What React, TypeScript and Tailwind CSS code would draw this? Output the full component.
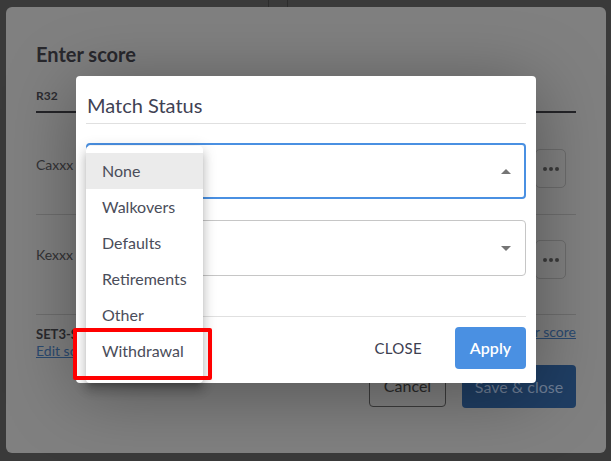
import React from "react";

const statuses = ["None", "Walkovers", "Defaults", "Retirements", "Other", "Withdrawal"];

const MoreButton: React.FC = () => (
  <button className="mr-[10px] w-[31px] h-[39px] rounded-[5px] border border-[#6c6c6c] flex items-center justify-center gap-[2px]">
    <span className="w-[4px] h-[4px] rounded-full bg-[#3a3a3a]" />
    <span className="w-[4px] h-[4px] rounded-full bg-[#3a3a3a]" />
    <span className="w-[4px] h-[4px] rounded-full bg-[#3a3a3a]" />
  </button>
);

const Caret: React.FC<{ up?: boolean }> = ({ up }) => (
  <svg width="10" height="5" viewBox="0 0 10 5" className="text-[#757575]">
    {up ? <path d="M0 5 L5 0 L10 5 Z" fill="currentColor" /> : <path d="M0 0 L5 5 L10 0 Z" fill="currentColor" />}
  </svg>
);

const App: React.FC = () => {
  return (
    <div className="relative w-[611px] h-[461px] overflow-hidden bg-[#3a3a3a] font-['Lato','Noto_Sans',sans-serif] flex flex-col">
      {/* page behind, dimmed */}
      <div className="h-[7px] flex shrink-0">
        <div className="w-[268px]" />
        <div className="w-[20px] border-x border-[#2c2c2c]" />
      </div>

      <div className="relative mx-[6px] w-[600px] h-[446px] rounded-[6px] bg-[#808080] px-[30px] pt-[33px]">
        <h2 className="text-[20px] leading-[28px] font-bold text-[#28282d]">Enter score</h2>

        <div className="mt-[21px] border-b-2 border-[#242428] pb-[8px]">
          <span className="block text-[12px] leading-[14px] font-bold text-[#2c2c30]">R32</span>
        </div>

        <div className="flex items-start justify-between pt-[36px] pb-[26px] border-b border-[#6e6e6e]">
          <span className="pt-[6px] text-[14px] leading-[20px] text-[#333336]">Caxxx</span>
          <MoreButton />
        </div>

        <div className="flex items-start justify-between pt-[25px] pb-[35px] border-b border-[#6e6e6e]">
          <span className="pt-[5px] text-[14px] leading-[20px] text-[#333336]">Kexxx</span>
          <MoreButton />
        </div>

        <div className="flex justify-between items-start">
          <div className="mt-[11px] flex flex-col">
            <span className="text-[13px] leading-[16px] font-bold text-[#2a2a2e]">SET3-SET1</span>
            <span className="text-[14px] leading-[18px] text-[#2b4a70] underline">Edit score</span>
          </div>
          <span className="mt-[8px] text-[14px] leading-[18px] text-[#2b4a70] underline">Clear score</span>
        </div>

        <div className="mt-[5px] flex justify-end gap-[16px]">
          <button className="w-[77px] h-[42px] rounded-[4px] border border-[#3c3c3c] text-[16px] text-[#2a2a2a]">
            Cancel
          </button>
          <button className="w-[114px] h-[43px] rounded-[4px] bg-[#1f3e64] text-[16px] text-[#6e7e96]">
            Save &amp; close
          </button>
        </div>

        {/* modal */}
        <div className="absolute left-[70px] top-[69px] w-[460px] h-[307px] rounded-[4px] bg-white px-[10px] pt-[16px] shadow-[0_10px_70px_rgba(0,0,0,0.35)]">
          <div className="border-b border-[#e0e0e0] pb-[5px] pl-[1px]">
            <h3 className="text-[20px] leading-[26px] text-[#3f4254]">Match Status</h3>
          </div>

          <div className="mt-[19px] h-[56px] rounded-[4px] border-2 border-[#4a90e2] flex items-center justify-end pr-[13px]">
            <Caret up />
          </div>

          <div className="mt-[21px] h-[56px] rounded-[4px] border border-[#c6c6c6] flex items-center justify-end pr-[14px]">
            <Caret />
          </div>

          <div className="mt-[40px] border-t border-[#e0e0e0] pt-[10px] flex items-center justify-end">
            <button className="text-[15px] tracking-[0.3px] text-[#3d4050]">CLOSE</button>
            <button className="ml-[33px] w-[71px] h-[42px] rounded-[4px] bg-[#4a90e2] text-[16px] font-semibold text-white">
              Apply
            </button>
          </div>

          {/* dropdown menu */}
          <ul className="absolute left-[10px] top-[70px] w-[117px] h-[237px] rounded-[4px] bg-white pt-[7px] shadow-[0_5px_5px_-3px_rgba(0,0,0,0.2),0_8px_10px_1px_rgba(0,0,0,0.14),0_3px_14px_2px_rgba(0,0,0,0.12)]">
            {statuses.map((s, i) => (
              <li
                key={s}
                className={`h-[36px] pl-[16px] flex items-center text-[16px] text-[#4a4d5a] ${i === 0 ? "bg-[#ebebeb]" : ""}`}
              >
                {s}
              </li>
            ))}
          </ul>
        </div>
      </div>

      {/* highlight box */}
      <div className="absolute left-[73px] top-[328px] w-[139px] h-[52px] border-4 border-[#ff0000] rounded-[2px]" />
    </div>
  );
};

export default App;
